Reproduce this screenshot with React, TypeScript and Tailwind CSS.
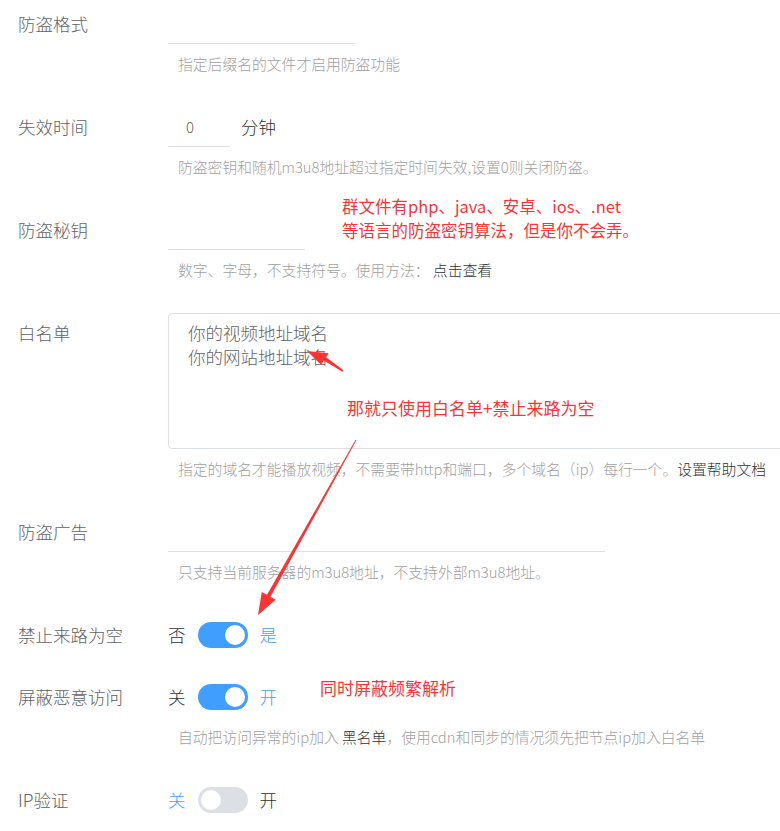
import type { ReactNode } from 'react';

const font = { fontFamily: '"Noto Sans CJK SC", "Noto Sans", sans-serif' };

function Item({ label, children, help }: { label: string; children: ReactNode; help?: ReactNode }) {
  return (
    <div className="flex mb-[22px]">
      <div className="w-[168px] shrink-0 pl-[18px] leading-[40px] text-[17.5px] text-[#606266]">{label}</div>
      <div className="flex-1 min-w-0">
        {children}
        {help && <div className="mt-[10px] mb-[11px] pl-[10px] leading-5 text-[14.8px] text-[#a0a0a0] whitespace-nowrap">{help}</div>}
      </div>
    </div>
  );
}

function Line({ w, value }: { w: string; value?: string }) {
  return (
    <div className={`${w} h-10 border-b border-[#dcdfe6] pl-[18px] leading-[40px] text-[15px] text-[#606266]`}>{value}</div>
  );
}

function Toggle({ on, off, active }: { on: string; off: string; active: boolean }) {
  return (
    <div className="flex items-center h-10 text-[17.5px]">
      <span className={active ? 'text-[#303133]' : 'text-[#409eff]'}>{off}</span>
      <div className={`ml-[12px] w-[50px] h-[26px] rounded-full p-[3px] flex ${active ? 'bg-[#409eff] justify-end' : 'bg-[#dcdfe6] justify-start'}`}>
        <div className="w-5 h-5 rounded-full bg-white" />
      </div>
      <span className={`ml-[12px] ${active ? 'text-[#409eff]' : 'text-[#303133]'}`}>{on}</span>
    </div>
  );
}

export default function App() {
  return (
    <div className="relative h-[831px] overflow-hidden bg-white pt-1 font-light" style={font}>
      <Item label="防盗格式" help="指定后缀名的文件才启用防盗功能">
        <Line w="w-[187px]" />
      </Item>

      <Item label="失效时间" help="防盗密钥和随机m3u8地址超过指定时间失效,设置0则关闭防盗。">
        <div className="flex items-center">
          <Line w="w-[62px]" value="0" />
          <span className="ml-[11px] text-[17.5px] text-[#303133]">分钟</span>
        </div>
      </Item>

      <Item
        label="防盗秘钥"
        help={<>数字、字母，不支持符号。使用方法： <span className="text-[#303133]">点击查看</span></>}
      >
        <Line w="w-[137px]" />
      </Item>

      <Item
        label="白名单"
        help={<>指定的域名才能播放视频，不需要带http和端口，多个域名（ip）每行一个。<span className="text-[#303133]">设置帮助文档</span></>}
      >
        <div className="w-[640px] h-[136px] border border-[#dcdfe6] rounded pt-[7px] pl-[19px] text-[17.5px] leading-6 text-[#606266]">
          <div>你的视频地址域名</div>
          <div>你的网站地址域名</div>
        </div>
      </Item>

      <Item label="防盗广告" help="只支持当前服务器的m3u8地址，不支持外部m3u8地址。">
        <Line w="w-[437px]" />
      </Item>

      <Item label="禁止来路为空">
        <Toggle off="否" on="是" active />
      </Item>

      <Item
        label="屏蔽恶意访问"
        help={<>自动把访问异常的ip加入 <span className="text-[#303133]">黑名单</span>，使用cdn和同步的情况须先把节点ip加入白名单</>}
      >
        <Toggle off="关" on="开" active />
      </Item>

      <Item label="IP验证">
        <Toggle off="关" on="开" active={false} />
      </Item>

      {/* annotations */}
      <div className="absolute left-[342px] top-[194px] font-normal text-[16.5px] leading-6 text-[#fa3434] whitespace-nowrap">
        <div>群文件有php、java、安卓、ios、.net</div>
        <div>等语言的防盗密钥算法，但是你不会弄。</div>
      </div>
      <div className="absolute left-[347px] top-[396px] font-normal text-[17px] leading-6 text-[#fa3434] whitespace-nowrap">
        那就只使用白名单+禁止来路为空
      </div>
      <div className="absolute left-[320px] top-[676px] font-normal text-[17px] leading-6 text-[#fa3434] whitespace-nowrap">
        同时屏蔽频繁解析
      </div>
      <svg className="absolute left-0 top-0 pointer-events-none" width="780" height="831">
        <polygon
          fill="#fa3434"
          points="342.4,371.8 323.9,360.6 321.1,364.8 307,351 328.8,353.2 326.1,357.3 343.6,370.2"
        />
        <polygon
          fill="#fa3434"
          points="355.6,439.8 267,594.8 261.8,591.9 258,615 275.7,599.7 270.5,596.8 356.4,440.2"
        />
      </svg>
    </div>
  );
}
